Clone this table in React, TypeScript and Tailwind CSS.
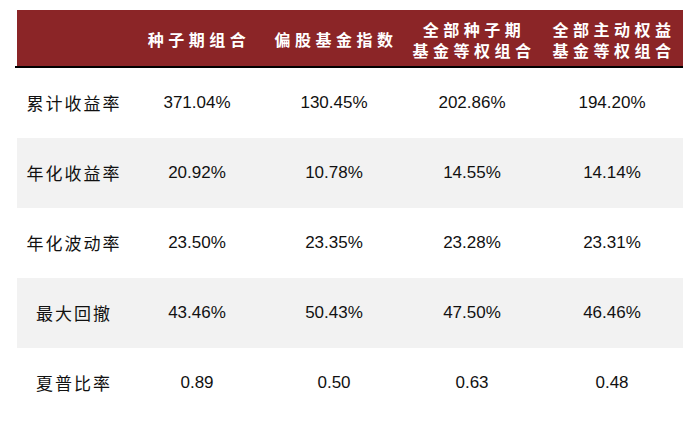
import React from "react";

const columns = ["种子期组合", "偏股基金指数", "全部种子期\n基金等权组合", "全部主动权益\n基金等权组合"];

const rows = [
  { label: "累计收益率", values: ["371.04%", "130.45%", "202.86%", "194.20%"] },
  { label: "年化收益率", values: ["20.92%", "10.78%", "14.55%", "14.14%"] },
  { label: "年化波动率", values: ["23.50%", "23.35%", "23.28%", "23.31%"] },
  { label: "最大回撤", values: ["43.46%", "50.43%", "47.50%", "46.46%"] },
  { label: "夏普比率", values: ["0.89", "0.50", "0.63", "0.48"] },
];

const grid = "grid grid-cols-[112px_136px_138px_138px_142px]";

export default function App() {
  return (
    <div className="w-[700px] h-[428px] bg-white pt-[10px] pl-[17px] overflow-hidden">
      <div className="w-[666px]">
        <div className={`${grid} h-[56px] bg-[#8b2527] items-center`}>
          <div />
          {columns.map((col) => (
            <div
              key={col}
              className="text-center text-white font-bold text-[16px] leading-[21px] tracking-[4.5px] pl-[4px] whitespace-pre-line pt-[3px] [font-family:'Noto_Sans_CJK_SC',sans-serif]"
            >
              {col}
            </div>
          ))}
        </div>
        <div className="h-[2px] w-[668px] -ml-[2px] bg-black" />
        {rows.map((row, i) => (
          <div
            key={row.label}
            className={`${grid} h-[70px] items-center ${i % 2 === 1 ? "bg-[#f2f2f2]" : "bg-white"}`}
          >
            <div className="text-center text-[17px] tracking-[2px] pl-[2px] text-[#111] [font-family:'Noto_Sans_CJK_SC',sans-serif]">
              {row.label}
            </div>
            {row.values.map((v, j) => (
              <div
                key={j}
                className="text-center text-[17px] text-[#111] [font-family:'Liberation_Sans',Arial,sans-serif]"
              >
                {v}
              </div>
            ))}
          </div>
        ))}
      </div>
    </div>
  );
}
